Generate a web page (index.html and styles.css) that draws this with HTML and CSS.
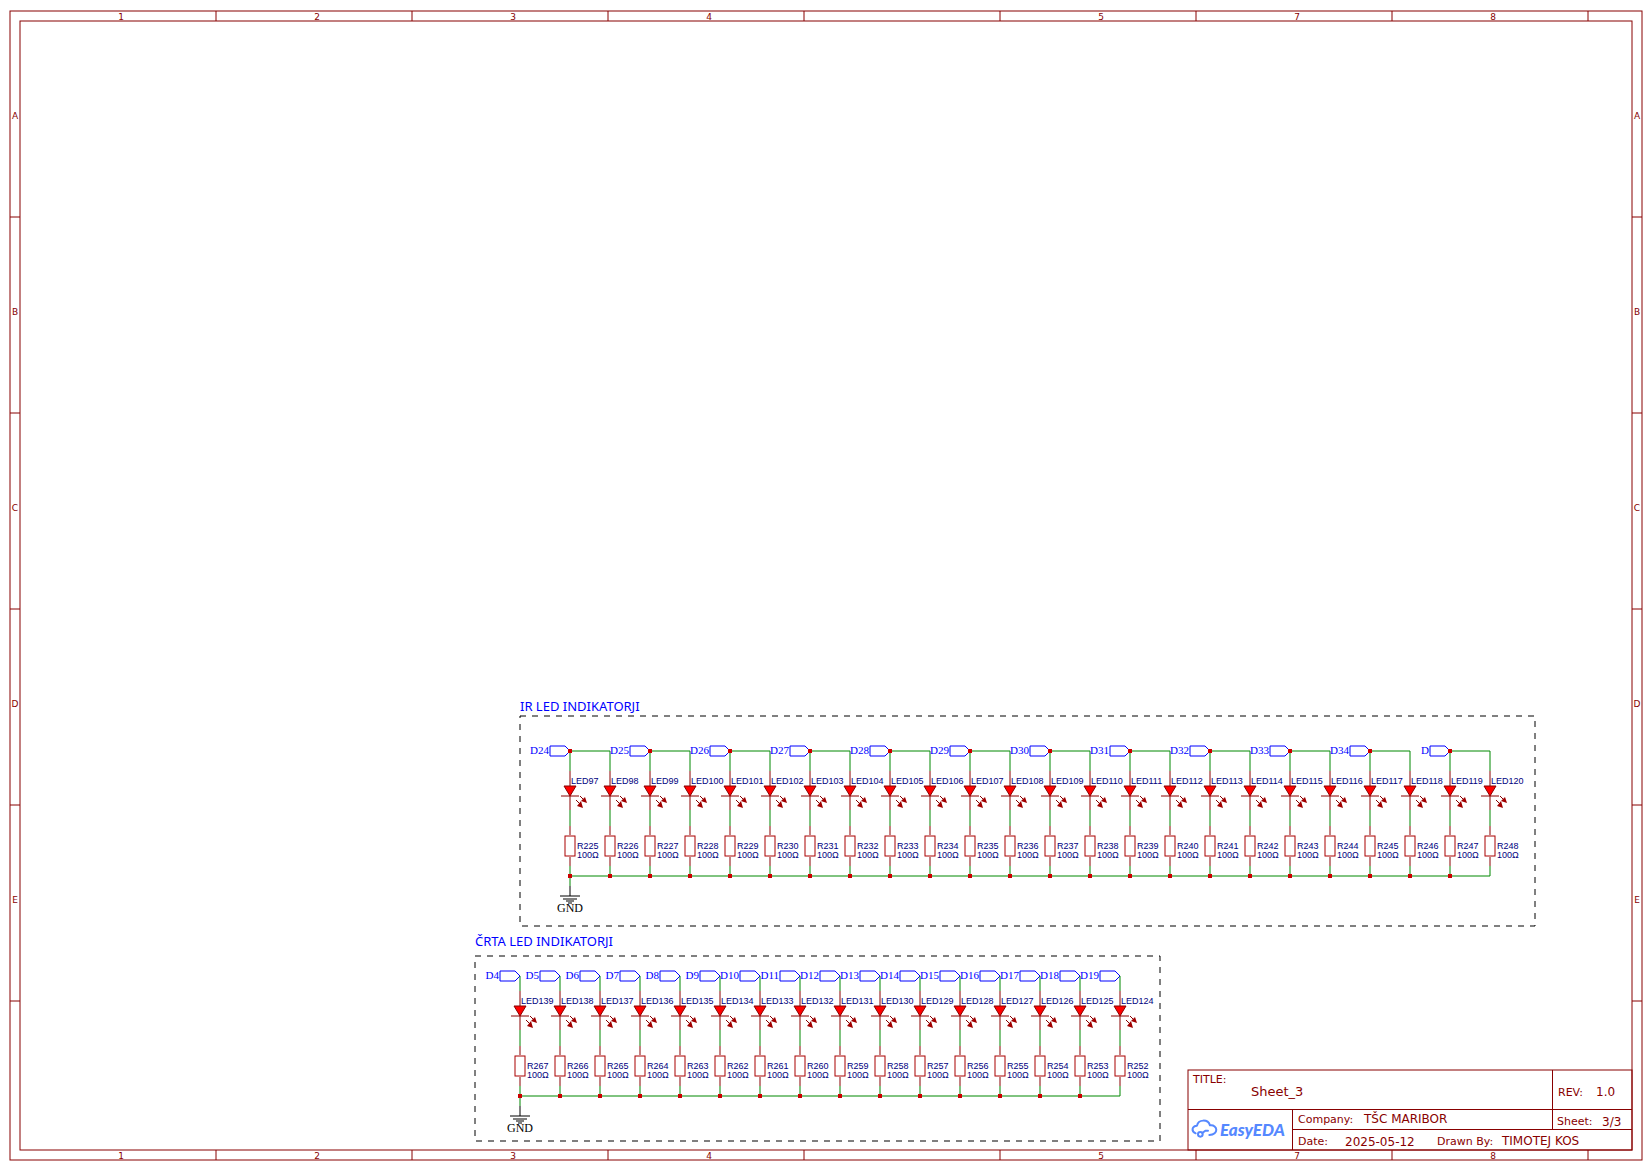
FILE: index.html
```html
<!DOCTYPE html>
<html lang="sl">
<head>
<meta charset="utf-8">
<title>Sheet_3</title>
<link rel="stylesheet" href="styles.css">
</head>
<body>
<svg class="sheet" viewBox="0 0 1652 1171" role="img" aria-label="Sheet_3">
<defs>
<g id="branch">
<path class="wire" d="M0 810V826M0 866V876"/>
<path class="pin" d="M0 771V786M0 796V810M0 826V835M0 857V866M-9 796H9"/>
<path class="diode" d="M-6 786H6L0 796Z"/>
<path class="ray" d="M6 800L10 804M10 796L14 800"/>
<path class="ray-head" d="M13 808L7 806L11 801ZM17 803L11 801L15 797Z"/>
<rect class="resistor" x="-5" y="836" width="10" height="20"/>
<text class="part" x="7" y="858">100Ω</text>
</g>
<g id="ground">
<path class="wire" d="M0 876V886"/>
<path class="earth" d="M0 886V896M-10 896H10M-7 899H7M-4 901H4M-2 903H2"/>
<text class="gnd" x="0" y="912">GND</text>
</g>
<path id="port" class="port" d="M0 0L-5 -5H-20V5H-5Z"/>
<rect id="dot" class="dot" x="-2" y="-2" width="4" height="4"/>
</defs>

<!-- Sheet frame and zone marks -->
<g class="frame">
<rect x="10" y="11" width="1632" height="1149"/>
<rect x="20" y="21" width="1612" height="1129"/>
<path d="M216 11V21M412 11V21M608 11V21M804 11V21M1000 11V21M1196 11V21M1392 11V21M1588 11V21"/>
<path d="M216 1150V1160M412 1150V1160M608 1150V1160M804 1150V1160M1000 1150V1160M1196 1150V1160M1392 1150V1160M1588 1150V1160"/>
<path d="M10 217H20M10 413H20M10 609H20M10 805H20M10 1001H20"/>
<path d="M1632 217H1642M1632 413H1642M1632 609H1642M1632 805H1642M1632 1001H1642"/>
</g>
<g class="zone">
<text x="121" y="20">1</text><text x="317" y="20">2</text><text x="513" y="20">3</text><text x="709" y="20">4</text><text x="1101" y="20">5</text><text x="1297" y="20">7</text><text x="1493" y="20">8</text>
<text x="121" y="1159">1</text><text x="317" y="1159">2</text><text x="513" y="1159">3</text><text x="709" y="1159">4</text><text x="1101" y="1159">5</text><text x="1297" y="1159">7</text><text x="1493" y="1159">8</text>
<text x="15" y="119">A</text><text x="15" y="315">B</text><text x="15" y="511">C</text><text x="15" y="707">D</text><text x="15" y="903">E</text>
<text x="1637" y="119">A</text><text x="1637" y="315">B</text><text x="1637" y="511">C</text><text x="1637" y="707">D</text><text x="1637" y="903">E</text>
</g>

<!-- IR LED indicators -->
<text class="heading" x="520" y="711">IR LED INDIKATORJI</text>
<path class="group" d="M520 716H1535V926H520Z"/>
<path class="wire" d="M570 771V751H610V771M650 771V751H690V771M730 771V751H770V771M810 771V751H850V771M890 771V751H930V771M970 771V751H1010V771M1050 771V751H1090V771M1130 771V751H1170V771M1210 771V751H1250V771M1290 771V751H1330V771M1370 771V751H1410V771M1450 771V751H1490V771M570 876H1490"/>
<g transform="translate(570)"><use href="#branch"/><text class="part" x="1" y="784">LED97</text><text class="part" x="7" y="849">R225</text></g>
<g transform="translate(610)"><use href="#branch"/><text class="part" x="1" y="784">LED98</text><text class="part" x="7" y="849">R226</text></g>
<g transform="translate(650)"><use href="#branch"/><text class="part" x="1" y="784">LED99</text><text class="part" x="7" y="849">R227</text></g>
<g transform="translate(690)"><use href="#branch"/><text class="part" x="1" y="784">LED100</text><text class="part" x="7" y="849">R228</text></g>
<g transform="translate(730)"><use href="#branch"/><text class="part" x="1" y="784">LED101</text><text class="part" x="7" y="849">R229</text></g>
<g transform="translate(770)"><use href="#branch"/><text class="part" x="1" y="784">LED102</text><text class="part" x="7" y="849">R230</text></g>
<g transform="translate(810)"><use href="#branch"/><text class="part" x="1" y="784">LED103</text><text class="part" x="7" y="849">R231</text></g>
<g transform="translate(850)"><use href="#branch"/><text class="part" x="1" y="784">LED104</text><text class="part" x="7" y="849">R232</text></g>
<g transform="translate(890)"><use href="#branch"/><text class="part" x="1" y="784">LED105</text><text class="part" x="7" y="849">R233</text></g>
<g transform="translate(930)"><use href="#branch"/><text class="part" x="1" y="784">LED106</text><text class="part" x="7" y="849">R234</text></g>
<g transform="translate(970)"><use href="#branch"/><text class="part" x="1" y="784">LED107</text><text class="part" x="7" y="849">R235</text></g>
<g transform="translate(1010)"><use href="#branch"/><text class="part" x="1" y="784">LED108</text><text class="part" x="7" y="849">R236</text></g>
<g transform="translate(1050)"><use href="#branch"/><text class="part" x="1" y="784">LED109</text><text class="part" x="7" y="849">R237</text></g>
<g transform="translate(1090)"><use href="#branch"/><text class="part" x="1" y="784">LED110</text><text class="part" x="7" y="849">R238</text></g>
<g transform="translate(1130)"><use href="#branch"/><text class="part" x="1" y="784">LED111</text><text class="part" x="7" y="849">R239</text></g>
<g transform="translate(1170)"><use href="#branch"/><text class="part" x="1" y="784">LED112</text><text class="part" x="7" y="849">R240</text></g>
<g transform="translate(1210)"><use href="#branch"/><text class="part" x="1" y="784">LED113</text><text class="part" x="7" y="849">R241</text></g>
<g transform="translate(1250)"><use href="#branch"/><text class="part" x="1" y="784">LED114</text><text class="part" x="7" y="849">R242</text></g>
<g transform="translate(1290)"><use href="#branch"/><text class="part" x="1" y="784">LED115</text><text class="part" x="7" y="849">R243</text></g>
<g transform="translate(1330)"><use href="#branch"/><text class="part" x="1" y="784">LED116</text><text class="part" x="7" y="849">R244</text></g>
<g transform="translate(1370)"><use href="#branch"/><text class="part" x="1" y="784">LED117</text><text class="part" x="7" y="849">R245</text></g>
<g transform="translate(1410)"><use href="#branch"/><text class="part" x="1" y="784">LED118</text><text class="part" x="7" y="849">R246</text></g>
<g transform="translate(1450)"><use href="#branch"/><text class="part" x="1" y="784">LED119</text><text class="part" x="7" y="849">R247</text></g>
<g transform="translate(1490)"><use href="#branch"/><text class="part" x="1" y="784">LED120</text><text class="part" x="7" y="849">R248</text></g>
<use href="#ground" x="570"/>
<g transform="translate(570 751)"><use href="#port"/><use href="#dot"/><text class="net" x="-21" y="3">D24</text></g>
<g transform="translate(650 751)"><use href="#port"/><use href="#dot"/><text class="net" x="-21" y="3">D25</text></g>
<g transform="translate(730 751)"><use href="#port"/><use href="#dot"/><text class="net" x="-21" y="3">D26</text></g>
<g transform="translate(810 751)"><use href="#port"/><use href="#dot"/><text class="net" x="-21" y="3">D27</text></g>
<g transform="translate(890 751)"><use href="#port"/><use href="#dot"/><text class="net" x="-21" y="3">D28</text></g>
<g transform="translate(970 751)"><use href="#port"/><use href="#dot"/><text class="net" x="-21" y="3">D29</text></g>
<g transform="translate(1050 751)"><use href="#port"/><use href="#dot"/><text class="net" x="-21" y="3">D30</text></g>
<g transform="translate(1130 751)"><use href="#port"/><use href="#dot"/><text class="net" x="-21" y="3">D31</text></g>
<g transform="translate(1210 751)"><use href="#port"/><use href="#dot"/><text class="net" x="-21" y="3">D32</text></g>
<g transform="translate(1290 751)"><use href="#port"/><use href="#dot"/><text class="net" x="-21" y="3">D33</text></g>
<g transform="translate(1370 751)"><use href="#port"/><use href="#dot"/><text class="net" x="-21" y="3">D34</text></g>
<g transform="translate(1450 751)"><use href="#port"/><use href="#dot"/><text class="net" x="-21" y="3">D</text></g>
<g transform="translate(0 876)">
<use href="#dot" x="570"/><use href="#dot" x="610"/><use href="#dot" x="650"/><use href="#dot" x="690"/><use href="#dot" x="730"/><use href="#dot" x="770"/><use href="#dot" x="810"/><use href="#dot" x="850"/><use href="#dot" x="890"/><use href="#dot" x="930"/><use href="#dot" x="970"/><use href="#dot" x="1010"/><use href="#dot" x="1050"/><use href="#dot" x="1090"/><use href="#dot" x="1130"/><use href="#dot" x="1170"/><use href="#dot" x="1210"/><use href="#dot" x="1250"/><use href="#dot" x="1290"/><use href="#dot" x="1330"/><use href="#dot" x="1370"/><use href="#dot" x="1410"/><use href="#dot" x="1450"/>
</g>

<!-- Line LED indicators -->
<text class="heading" x="475" y="946">ČRTA LED INDIKATORJI</text>
<path class="group" d="M475 956H1160V1141H475Z"/>
<g transform="translate(0 976)">
<g transform="translate(520)"><use href="#port"/><text class="net" x="-21" y="3">D4</text></g>
<g transform="translate(560)"><use href="#port"/><text class="net" x="-21" y="3">D5</text></g>
<g transform="translate(600)"><use href="#port"/><text class="net" x="-21" y="3">D6</text></g>
<g transform="translate(640)"><use href="#port"/><text class="net" x="-21" y="3">D7</text></g>
<g transform="translate(680)"><use href="#port"/><text class="net" x="-21" y="3">D8</text></g>
<g transform="translate(720)"><use href="#port"/><text class="net" x="-21" y="3">D9</text></g>
<g transform="translate(760)"><use href="#port"/><text class="net" x="-21" y="3">D10</text></g>
<g transform="translate(800)"><use href="#port"/><text class="net" x="-21" y="3">D11</text></g>
<g transform="translate(840)"><use href="#port"/><text class="net" x="-21" y="3">D12</text></g>
<g transform="translate(880)"><use href="#port"/><text class="net" x="-21" y="3">D13</text></g>
<g transform="translate(920)"><use href="#port"/><text class="net" x="-21" y="3">D14</text></g>
<g transform="translate(960)"><use href="#port"/><text class="net" x="-21" y="3">D15</text></g>
<g transform="translate(1000)"><use href="#port"/><text class="net" x="-21" y="3">D16</text></g>
<g transform="translate(1040)"><use href="#port"/><text class="net" x="-21" y="3">D17</text></g>
<g transform="translate(1080)"><use href="#port"/><text class="net" x="-21" y="3">D18</text></g>
<g transform="translate(1120)"><use href="#port"/><text class="net" x="-21" y="3">D19</text></g>
</g>
<path class="wire" d="M520 976V991M560 976V991M600 976V991M640 976V991M680 976V991M720 976V991M760 976V991M800 976V991M840 976V991M880 976V991M920 976V991M960 976V991M1000 976V991M1040 976V991M1080 976V991M1120 976V991M520 1096H1120"/>
<g transform="translate(0 220)">
<g transform="translate(520)"><use href="#branch"/><text class="part" x="1" y="784">LED139</text><text class="part" x="7" y="849">R267</text></g>
<g transform="translate(560)"><use href="#branch"/><text class="part" x="1" y="784">LED138</text><text class="part" x="7" y="849">R266</text></g>
<g transform="translate(600)"><use href="#branch"/><text class="part" x="1" y="784">LED137</text><text class="part" x="7" y="849">R265</text></g>
<g transform="translate(640)"><use href="#branch"/><text class="part" x="1" y="784">LED136</text><text class="part" x="7" y="849">R264</text></g>
<g transform="translate(680)"><use href="#branch"/><text class="part" x="1" y="784">LED135</text><text class="part" x="7" y="849">R263</text></g>
<g transform="translate(720)"><use href="#branch"/><text class="part" x="1" y="784">LED134</text><text class="part" x="7" y="849">R262</text></g>
<g transform="translate(760)"><use href="#branch"/><text class="part" x="1" y="784">LED133</text><text class="part" x="7" y="849">R261</text></g>
<g transform="translate(800)"><use href="#branch"/><text class="part" x="1" y="784">LED132</text><text class="part" x="7" y="849">R260</text></g>
<g transform="translate(840)"><use href="#branch"/><text class="part" x="1" y="784">LED131</text><text class="part" x="7" y="849">R259</text></g>
<g transform="translate(880)"><use href="#branch"/><text class="part" x="1" y="784">LED130</text><text class="part" x="7" y="849">R258</text></g>
<g transform="translate(920)"><use href="#branch"/><text class="part" x="1" y="784">LED129</text><text class="part" x="7" y="849">R257</text></g>
<g transform="translate(960)"><use href="#branch"/><text class="part" x="1" y="784">LED128</text><text class="part" x="7" y="849">R256</text></g>
<g transform="translate(1000)"><use href="#branch"/><text class="part" x="1" y="784">LED127</text><text class="part" x="7" y="849">R255</text></g>
<g transform="translate(1040)"><use href="#branch"/><text class="part" x="1" y="784">LED126</text><text class="part" x="7" y="849">R254</text></g>
<g transform="translate(1080)"><use href="#branch"/><text class="part" x="1" y="784">LED125</text><text class="part" x="7" y="849">R253</text></g>
<g transform="translate(1120)"><use href="#branch"/><text class="part" x="1" y="784">LED124</text><text class="part" x="7" y="849">R252</text></g>
<use href="#ground" x="520"/>
</g>
<g transform="translate(0 1096)">
<use href="#dot" x="520"/><use href="#dot" x="560"/><use href="#dot" x="600"/><use href="#dot" x="640"/><use href="#dot" x="680"/><use href="#dot" x="720"/><use href="#dot" x="760"/><use href="#dot" x="800"/><use href="#dot" x="840"/><use href="#dot" x="880"/><use href="#dot" x="920"/><use href="#dot" x="960"/><use href="#dot" x="1000"/><use href="#dot" x="1040"/><use href="#dot" x="1080"/>
</g>

<!-- Title block -->
<g class="frame">
<rect x="1188" y="1070" width="444" height="80"/>
</g>
<path class="rule" d="M1188 1109H1632V1110H1188ZM1292 1129H1632V1130H1292ZM1292 1109H1293V1150H1292ZM1552 1070H1553V1130H1552Z"/>
<g class="label">
<text x="1193" y="1083">TITLE:</text>
<text x="1558" y="1096">REV:</text>
<text x="1298" y="1123">Company:</text>
<text x="1557" y="1125">Sheet:</text>
<text x="1298" y="1145">Date:</text>
<text x="1437" y="1145">Drawn By:</text>
</g>
<g class="value">
<text class="name" x="1251" y="1096">Sheet_3</text>
<text x="1596" y="1096">1.0</text>
<text x="1364" y="1123">TŠC MARIBOR</text>
<text x="1602" y="1126">3/3</text>
<text x="1345" y="1146">2025-05-12</text>
<text x="1502" y="1145">TIMOTEJ KOS</text>
</g>
<svg class="cloud" x="1190" y="1116" width="30" height="26" viewBox="0 0 90 78">
<path d="M17 52C3 46 5 30 21 29C25 9 54 9 60 28C84 25 87 57 58 57"/>
<circle cx="31" cy="55" r="7"/>
<path d="M37 51L46 44H54"/>
</svg>
<text class="brand" x="1220" y="1136">EasyEDA</text>
</svg>
</body>
</html>
```
FILE: styles.css
```css
body { margin: 0; background: #fff; }
.sheet { display: block; width: 100%; height: auto; font-family: "DejaVu Sans", Verdana, sans-serif; }

.frame { fill: none; stroke: #880000; }
.rule { fill: #880000; }
.zone { font-size: 9px; fill: #880000; text-anchor: middle; }

.heading { font: 13px "Noto Sans", Verdana, sans-serif; fill: #0000ff; }
.group { fill: none; stroke: #000; stroke-dasharray: 6 6; }

.wire { fill: none; stroke: #008800; }
.pin { fill: none; stroke: #880000; }
.diode { fill: #ff0000; stroke: #880000; }
.ray { fill: none; stroke: #880000; }
.ray-head { fill: #a00000; }
.resistor { fill: none; stroke: #aa0000; }
.part { font: 9px "Liberation Sans", Arial, sans-serif; fill: #000080; }
.port { fill: none; stroke: #0000ff; }
.net { font: 11px "Liberation Serif", "Times New Roman", serif; fill: #0000ff; text-anchor: end; }
.dot { fill: #cc0000; }
.earth { fill: none; stroke: #000; }
.gnd { font: 12px "Liberation Serif", "Times New Roman", serif; fill: #000; text-anchor: middle; }

.label { font-size: 11px; fill: #880000; }
.value { font-size: 12px; fill: #880000; }
.name { font-size: 13px; }
.cloud { fill: none; stroke: #5588ff; stroke-width: 6; stroke-linecap: round; stroke-linejoin: round; }
.brand { font: italic 900 17px Lato, sans-serif; fill: #5588ff; }
```
